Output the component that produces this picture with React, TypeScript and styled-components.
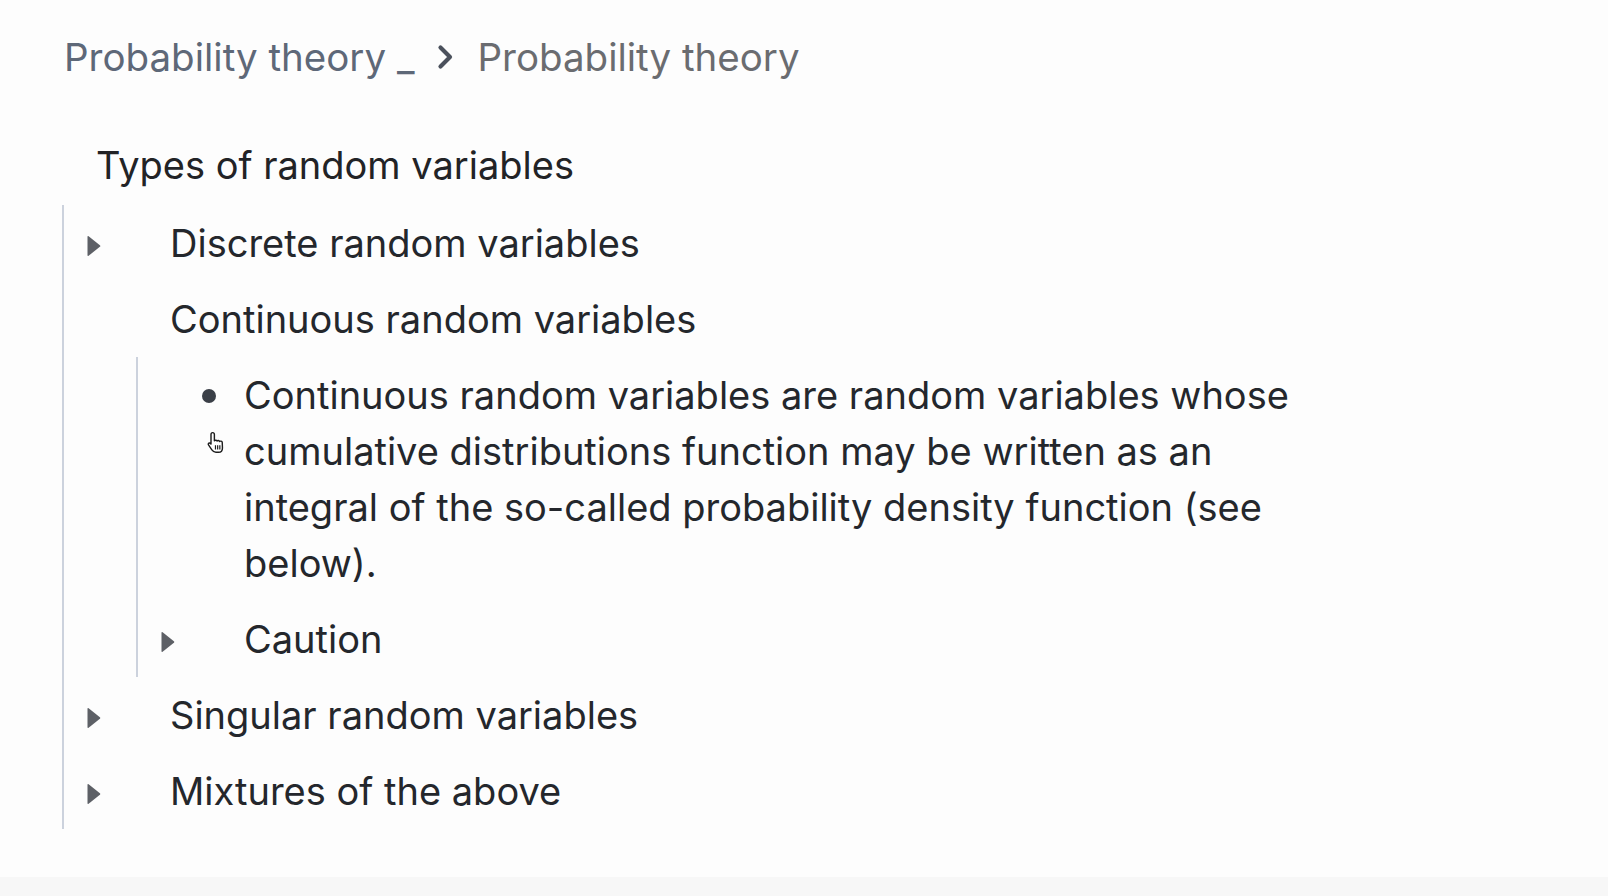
import React from "react";
import styled, { createGlobalStyle } from "styled-components";

const GlobalStyle = createGlobalStyle`
  html, body {
    margin: 0;
    padding: 0;
    background: #fdfdfd;
  }
  body {
    font-family: Inter, "Noto Sans", "Liberation Sans", sans-serif;
    -webkit-font-smoothing: antialiased;
  }
`;

const Page = styled.div`
  position: relative;
  min-height: 100vh;
  display: flex;
  flex-direction: column;
  box-sizing: border-box;
`;

const Main = styled.main`
  flex: 1;
  padding: 29px 0 0 62px;
`;

const BottomStrip = styled.div`
  height: 19px;
  background: #f7f7f7;
`;

const Breadcrumb = styled.nav`
  display: flex;
  align-items: center;
  padding-left: 2px;
  height: 56px;
  font-size: 38.5px;
  line-height: 56px;
`;

const Crumb = styled.span<{ $tone: string }>`
  color: ${(p) => p.$tone};
  white-space: pre;
`;

const Separator = styled.span`
  display: flex;
  align-items: center;
  width: 17px;
  height: 26px;
  margin: 0 23px 0 23px;
  color: #4b515c;
`;

const Heading = styled.div`
  margin-top: 42px;
  padding: 10px 0 10px 34px;
  font-size: 38px;
  line-height: 56px;
  color: #222326;
`;

const Outline = styled.div<{ $indent?: number }>`
  margin-left: ${(p) => p.$indent ?? 0}px;
  border-left: 2px solid #ccd2dd;
  margin-top: ${(p) => (p.$indent ? 0 : 2)}px;
`;

const Row = styled.div`
  display: grid;
  grid-template-columns: 106px 1fr;
  padding: 10px 0;
  font-size: 38px;
  line-height: 56px;
  color: #24272c;
`;

const Gutter = styled.div`
  display: flex;
  align-items: center;
  height: 56px;
`;

const ToggleButton = styled.span`
  display: flex;
  margin-left: 23px;
  margin-top: 6px;
  color: #5d6066;
`;

const BulletDot = styled.span`
  display: block;
  width: 14px;
  height: 14px;
  border-radius: 50%;
  background: #3a3f47;
  margin-left: 64px;
  margin-top: 2px;
`;

const RowText = styled.div<{ $wrap?: boolean }>`
  max-width: ${(p) => (p.$wrap ? "1080px" : "none")};
`;

const Cursor = styled.span`
  position: absolute;
  left: 206px;
  top: 431px;
  width: 22px;
  height: 24px;
`;

const Triangle = () => (
  <svg width="14" height="22" viewBox="0 0 14 22">
    <path d="M1.6 1.2 L12.9 10.2 Q13.9 11 12.9 11.8 L1.6 20.8 Q0.5 21.4 0.5 20.2 L0.5 1.8 Q0.5 0.6 1.6 1.2 Z" fill="currentColor" />
  </svg>
);

const Chevron = () => (
  <svg width="17" height="26" viewBox="0 0 17 26" fill="none">
    <path d="M3.5 3.5 L13 13 L3.5 22.5" stroke="currentColor" strokeWidth="4.2" strokeLinecap="round" strokeLinejoin="round" />
  </svg>
);

const HandCursor = () => (
  <svg width="22" height="24" viewBox="0 0 20 22">
    <path
      d="M6 1.5 C7 1.5 7.6 2.2 7.6 3.2 L7.6 9 C8 8.4 9.6 8.3 10 9.2 C10.5 8.5 12 8.6 12.4 9.6 C12.9 9 14.6 9.2 14.8 10.4 L15 15.5 C15 17.8 13.8 19.5 11.5 19.5 L9 19.5 C7.3 19.5 6.3 18.7 5.3 17.3 L2.2 12.8 C1.6 11.9 2.2 10.9 3.2 11 C3.8 11.1 4.2 11.5 4.5 12 L4.5 3.2 C4.5 2.2 5 1.5 6 1.5 Z"
      fill="#ffffff"
      stroke="#1d1d1d"
      strokeWidth="1.3"
      strokeLinejoin="round"
    />
    <path d="M8.6 13 L8.6 17 M10.6 13 L10.6 17 M12.6 13 L12.6 17" stroke="#1d1d1d" strokeWidth="1.1" />
  </svg>
);

type Item = { label: string; kind: "toggle" | "plain" };

const ToggleRow: React.FC<{ label: string }> = ({ label }) => (
  <Row>
    <Gutter>
      <ToggleButton>
        <Triangle />
      </ToggleButton>
    </Gutter>
    <RowText>{label}</RowText>
  </Row>
);

const PlainRow: React.FC<{ label: string }> = ({ label }) => (
  <Row>
    <Gutter />
    <RowText>{label}</RowText>
  </Row>
);

const BulletRow: React.FC<{ text: string }> = ({ text }) => (
  <Row>
    <Gutter>
      <BulletDot />
    </Gutter>
    <RowText $wrap>{text}</RowText>
  </Row>
);

export default function App() {
  const topItems: Item[] = [
    { label: "Singular random variables", kind: "toggle" },
    { label: "Mixtures of the above", kind: "toggle" },
  ];
  return (
    <>
      <GlobalStyle />
      <Page>
        <Main>
          <Breadcrumb>
            <Crumb $tone="#5e6878">Probability theory _</Crumb>
            <Separator>
              <Chevron />
            </Separator>
            <Crumb $tone="#6a6c70">Probability theory</Crumb>
          </Breadcrumb>
          <Heading>Types of random variables</Heading>
          <Outline>
            <ToggleRow label="Discrete random variables" />
            <PlainRow label="Continuous random variables" />
            <Outline $indent={72}>
              <BulletRow text="Continuous random variables are random variables whose cumulative distributions function may be written as an integral of the so-called probability density function (see below)." />
              <ToggleRow label="Caution" />
            </Outline>
            {topItems.map((it) =>
              it.kind === "toggle" ? (
                <ToggleRow key={it.label} label={it.label} />
              ) : (
                <PlainRow key={it.label} label={it.label} />
              )
            )}
          </Outline>
        </Main>
        <BottomStrip />
        <Cursor>
          <HandCursor />
        </Cursor>
      </Page>
    </>
  );
}
